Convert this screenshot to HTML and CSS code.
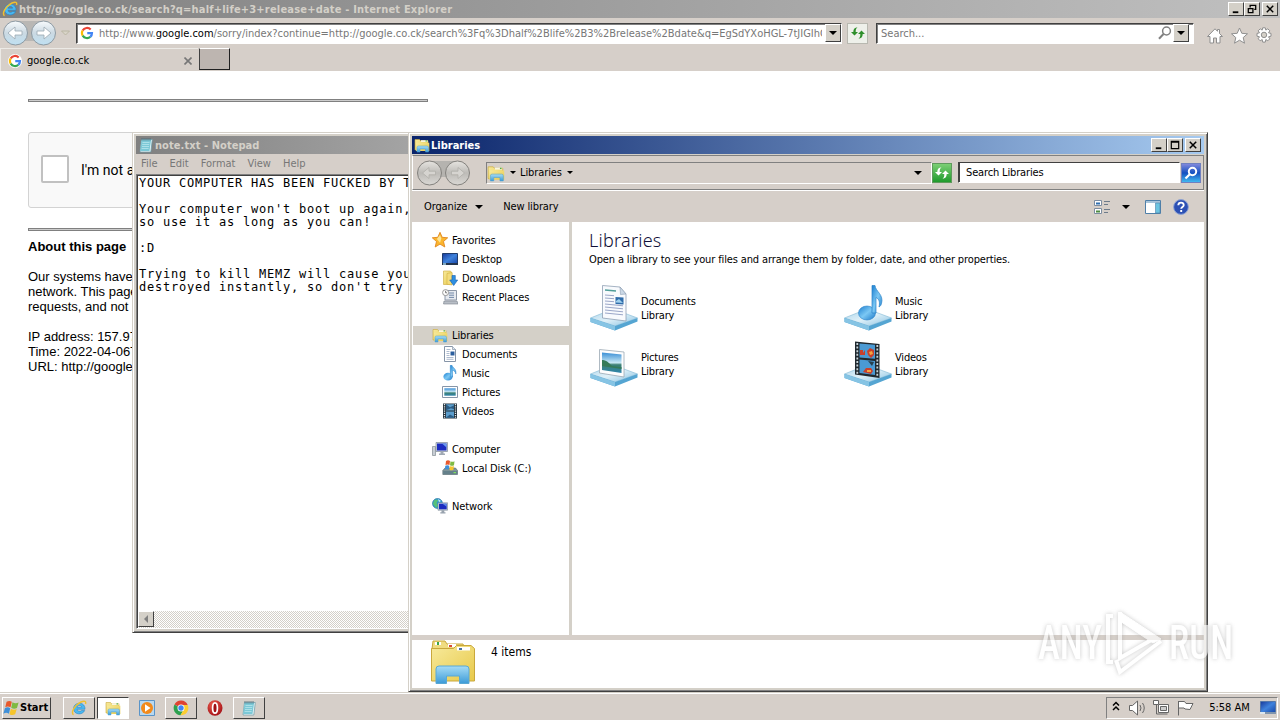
FILE: index.html
```html
<!DOCTYPE html>
<html lang="en">
<head>
    <meta charset="UTF-8">
    <meta name="viewport" content="width=device-width, initial-scale=1.0">
    <title>Desktop</title>
    <link rel="stylesheet" href="styles.css">
</head>
<body>
    <!-- Shared icons -->
    <svg class="sprite" width="0" height="0">
        <defs>
            <linearGradient id="gFolder" x1="0" y1="0" x2="1" y2="1">
                <stop offset="0" stop-color="#f7ea9c"/><stop offset="1" stop-color="#e8c94a"/>
            </linearGradient>
            <linearGradient id="gBlue" x1="0" y1="0" x2="0" y2="1">
                <stop offset="0" stop-color="#a6dcf6"/><stop offset="1" stop-color="#3c9bd8"/>
            </linearGradient>
            <linearGradient id="gScreen" x1="0" y1="0" x2="1" y2="1">
                <stop offset="0" stop-color="#16389a"/><stop offset=".5" stop-color="#3f82dc"/><stop offset="1" stop-color="#1746a8"/>
            </linearGradient>
            <linearGradient id="gBase" x1="0" y1="0" x2="1" y2="1">
                <stop offset="0" stop-color="#a9d3ea"/><stop offset=".5" stop-color="#dff0f8"/><stop offset="1" stop-color="#86c1e2"/>
            </linearGradient>
            <linearGradient id="gNote" x1="0" y1="0" x2="1" y2="1">
                <stop offset="0" stop-color="#1c7fd0"/><stop offset=".5" stop-color="#7cc8f4"/><stop offset="1" stop-color="#1a78c8"/>
            </linearGradient>
            <linearGradient id="gSky" x1="0" y1="0" x2="0" y2="1">
                <stop offset="0" stop-color="#3b8fd6"/><stop offset=".5" stop-color="#c9e8f4"/><stop offset=".6" stop-color="#3c7f72"/><stop offset="1" stop-color="#2f86ae"/>
            </linearGradient>
            <radialGradient id="gRed" cx=".4" cy=".3" r=".8">
                <stop offset="0" stop-color="#f06050"/><stop offset="1" stop-color="#9c0810"/>
            </radialGradient>
            <linearGradient id="gOrb" x1="0" y1="0" x2="0" y2="1">
                <stop offset="0" stop-color="#f8fbfd"/><stop offset=".5" stop-color="#cbd9e2"/><stop offset="1" stop-color="#bfe0f2"/>
            </linearGradient>
            <linearGradient id="gOrbGray" x1="0" y1="0" x2="0" y2="1">
                <stop offset="0" stop-color="#e6e4e0"/><stop offset=".5" stop-color="#bdbbb7"/><stop offset="1" stop-color="#dad8d4"/>
            </linearGradient>
        </defs>

        <symbol id="ie" viewBox="0 0 16 16">
            <path d="M14 9.300H6c.3 2.200 3.200 2.600 4.600 1.200h3.100C11.500 15.600 2.600 15 2.600 8.500c0-7 12-7.300 11.400.8zM6 7.200h4.700c-.3-2.300-4.400-2.300-4.700 0z" fill="#4ab8f0" stroke="#1a7cc4" stroke-width=".5"/>
            <path d="M2.600 14.600C-.5 13.500 3 5.500 10 2c3.500-1.600 5.400-.6 4.500 2" fill="none" stroke="#f0c030" stroke-width="1.400"/>
        </symbol>
        <symbol id="google" viewBox="0 0 16 16">
            <circle cx="8" cy="8" r="8" fill="#fff"/>
            <path d="M3 5.200A5.800 5.800 0 0 1 12.200 3.900" fill="none" stroke="#ea4335" stroke-width="2.500"/>
            <path d="M3 5.200A5.800 5.800 0 0 0 3.100 11" fill="none" stroke="#fbbc05" stroke-width="2.500"/>
            <path d="M3.100 11A5.800 5.800 0 0 0 11.800 12.400" fill="none" stroke="#34a853" stroke-width="2.500"/>
            <path d="M11.800 12.400A5.600 5.600 0 0 0 13.700 8.100H8.300" fill="none" stroke="#4285f4" stroke-width="2.500"/>
        </symbol>
        <symbol id="refresh" viewBox="0 0 16 16">
            <path d="M4.500 10.500L1 7h2.300c0-3 1.600-4.500 4.200-4.700C5.900 3.500 5.700 5 5.700 7H8zM11.500 5.500L15 9h-2.300c0 3-1.600 4.500-4.200 4.700 1.600-1.200 1.800-2.700 1.800-4.700H8z"/>
        </symbol>
        <symbol id="explorer" viewBox="0 0 16 16">
            <path d="M1 2.500h4.500l1 1.200H14V13H1z" fill="url(#gFolder)" stroke="#c9a83c" stroke-width=".6"/>
            <path d="M7 3.200h6.500V5H7z" fill="#f8f6e0"/><path d="M11.500 3.300H13v1.200h-1.500z" fill="#57ad4a"/>
            <path d="M2 5.700h13.300V14H2z" fill="url(#gFolder)"/>
            <path d="M3 15V10.500q0-1.500 1.500-1.500H13q1.500 0 1.500 1.500V15h-3v-3H6v3z" fill="url(#gBlue)" stroke="#4fa0cf" stroke-width=".5"/>
        </symbol>
        <symbol id="notepad" viewBox="0 0 16 16">
            <path d="M3.500 2.500h10.800L12.800 15H2z" fill="#e9f6f8" stroke="#6a9aa6" stroke-width=".7"/>
            <path d="M3.500 2.800h9.600L11.500 14H2.200z" fill="#7cc8d6"/>
            <path d="M4.500 5.500h7M4.200 7.500h7M4 9.500h7M3.600 11.500h7" stroke="#b8e6ec" stroke-width=".8"/>
            <path d="M4 1v2.500M6 1v2.500M8 1v2.500M10 1v2.500M12 1v2.500" stroke="#4a6874" stroke-width=".8"/>
        </symbol>
        <symbol id="star" viewBox="0 0 16 16">
            <path d="M8 .3l2.200 5 5.500.5-4.200 3.700 1.300 5.500L8 12.100l-4.800 2.900 1.300-5.500L.3 5.800l5.500-.5z" fill="#fbb52c" stroke="#e08820" stroke-width=".9"/>
            <path d="M8 3l1.300 3.500L8 10.800 4.900 7z" fill="#fde596"/>
        </symbol>
        <symbol id="desktop" viewBox="0 0 16 16">
            <path d="M.5 2.500h15v10.300H.5z" fill="url(#gScreen)" stroke="#203c6c"/>
            <path d="M0 12h16v2H0z" fill="#24344c"/><path d="M1 12.300h3v1.400H1z" fill="#a8d8f0"/>
        </symbol>
        <symbol id="downloads" viewBox="0 0 16 16">
            <path d="M1.500 1h7l1.500 2v11.500H1.500z" fill="url(#gFolder)" stroke="#cda93a" stroke-width=".6"/>
            <path d="M5 3.500l5-1V15l-5-.8z" fill="#f3dc7c" stroke="#cda93a" stroke-width=".5"/>
            <path d="M10 5.500h3.300V10H15.700l-4 5.500-4-5.500H10z" fill="#2f8fe0" stroke="#1a62b0" stroke-width=".6"/>
        </symbol>
        <symbol id="recent" viewBox="0 0 16 16">
            <path d="M3 1.500h11.500v9.500H3z" fill="#e6eaf0" stroke="#8d98a8"/>
            <path d="M7 4h5M7 6.200h5M7 8.400h5" stroke="#7088a8"/>
            <path d="M2 12h13l1 3H1.500z" fill="#b8bec6" stroke="#78818c" stroke-width=".6"/>
            <circle cx="3.600" cy="3.600" r="3" fill="#fff" stroke="#8f8f8f" stroke-width=".9"/>
            <path d="M3.600 1.800v2h1.500" fill="none" stroke="#555" stroke-width=".8"/>
        </symbol>
        <symbol id="document" viewBox="0 0 16 16">
            <path d="M2.500.5h8l3 3v12h-11z" fill="#fff" stroke="#8695a8"/>
            <path d="M10.500.5v3h3" fill="#dce6f0" stroke="#8695a8" stroke-width=".7"/>
            <path d="M4.500 3.500h4M4.500 5.500h3M4.500 7.500h3M4.500 9.500h3M4.500 11.500h7M4.500 13.300h7" stroke="#9aabc4" stroke-width=".8"/>
            <path d="M8.500 5.500h4v4h-4z" fill="#2c5f9e"/>
        </symbol>
        <symbol id="music" viewBox="0 0 16 16">
            <ellipse cx="6" cy="11.700" rx="4.600" ry="3.900" fill="url(#gNote)"/>
            <path d="M8.300 12V.3H10c.5 2.500 4.800 3.500 3.800 8.700-.4-2.300-1.600-3.500-3.300-3.800V12z" fill="url(#gNote)" stroke="#2a82c8" stroke-width=".5"/>
        </symbol>
        <symbol id="picture" viewBox="0 0 16 16">
            <path d="M.5 2.500h15v11H.5z" fill="#fff" stroke="#8695a8"/><path d="M2.300 4.300h11.400v7.400H2.300z" fill="url(#gSky)"/>
        </symbol>
        <symbol id="video" viewBox="0 0 16 16">
            <path d="M1 .5h14v15H1z" fill="#22303a"/>
            <path d="M4 1.200h8v6.200H4zM4 8.600h8v6.200H4z" fill="#5b9dcc"/>
            <path d="M4 1.200l4 3 4-2v4l-3-1-5 2zM4 14.500l4-3 4 2.300v1H4z" fill="#2b5c84"/>
            <path d="M2.500 1v14M13.500 1v14" stroke="#e4eaee" stroke-width="1.300" stroke-dasharray="1.200 1"/>
        </symbol>
        <symbol id="computer" viewBox="0 0 16 16">
            <path d="M.5 5.500h3v9h-3z" fill="#c8ced4" stroke="#848c94" stroke-width=".7"/>
            <path d="M4 1.500h11.500v9H4z" fill="#cdd6e0" stroke="#7e8a98" stroke-width=".7"/>
            <path d="M5 2.500h9.500v7H5z" fill="#1c2cc0"/><path d="M10 2.500h4.500v4z" fill="#6a9aee"/>
            <path d="M8.500 10.500h3v2H13v1.500H7v-1.500h1.500z" fill="#a0a9b4"/>
        </symbol>
        <symbol id="disk" viewBox="0 0 16 16">
            <path d="M.8 10.500L3 8h10.500l2 2.500v4H.8z" fill="#7f9498" stroke="#53666c" stroke-width=".6"/>
            <path d="M1.200 11h14v3.200h-14z" fill="#64808a"/><path d="M11.500 12h2.500v1.200h-2.500z" fill="#7fe060"/>
            <path d="M4 1q2-1.500 4 0L7.500 5q-2-1-4 0z" fill="#e8592c"/><path d="M8.500 1.200q2 1 4 0L12 5.200q-2 1-4 0z" fill="#7fba42"/>
            <path d="M3.300 5.800q2-1 4 0L6.800 9.500q-2-1-4 0z" fill="#3f8fd8"/><path d="M7.900 6q2 1 4 0l-.5 3.800q-2 1-4 0z" fill="#f6c52c"/>
        </symbol>
        <symbol id="network" viewBox="0 0 16 16">
            <circle cx="5.500" cy="5.500" r="5" fill="#2c9ad0" stroke="#1c6a9c" stroke-width=".6"/>
            <path d="M2 2.500q3-2 4 0L4.500 5 6 7.500 4 10 1 6z" fill="#58c078"/><path d="M6 1l3 2-2 1z" fill="#d0f0f8"/>
            <path d="M6 4.800h9.600v7.400H6z" fill="#d2dae2" stroke="#6f7c8c" stroke-width=".6"/><path d="M7 5.700h7.700v5.600H7z" fill="#1c2cc0"/>
            <path d="M10.500 5.700h4.200v3z" fill="#5c88e8"/><path d="M9.500 12.200h2.800v2h1.200v1.300H8.300v-1.300h1.200z" fill="#98a2ae"/>
        </symbol>
        <symbol id="base" viewBox="0 0 48 46">
            <path d="M.5 33L23 24l24.500 9L25 41z" fill="url(#gBase)" stroke="#8fc0da" stroke-width=".7"/>
            <path d="M.5 33L25 41l22.500-8v3.500L25 45.500.5 37z" fill="#55a5d2"/>
            <path d="M.5 33L25 41v4.500L.5 37z" fill="#86c4e4"/>
        </symbol>
        <symbol id="winflag" viewBox="0 0 18 16">
            <path d="M3.800 1.500q3-2 5.500 0L8 7.300q-3-2-5.600 0z" fill="#e8592c"/><path d="M10 2q3 2 6.500.3l-1.700 5.600q-3 1.700-6.100-.1z" fill="#7fba42"/>
            <path d="M2 8.200q3-2 5.600 0L6.300 14q-3-2-5.900 0z" fill="#3f8fd8"/><path d="M8.400 8.700q3 2 6.100.3l-1.600 5.700q-3 1.700-6.100-.1z" fill="#f6c52c"/>
        </symbol>
    </svg>

    <div class="desktop">
        <!-- Internet Explorer -->
        <div class="browser">
            <div class="titlebar browser-title">
                <svg class="icon"><use href="#ie"/></svg>
                <span class="title-text">http://google.co.ck/search?q=half+life+3+release+date - Internet Explorer</span>
                <div class="controls">
                    <svg class="ctl" viewBox="0 0 15 13"><path d="M4 10h6" stroke="#000" stroke-width="2"/></svg>
                    <svg class="ctl" viewBox="0 0 15 13"><path d="M5.500 5V2.500h6v4.500H10M5 2.500h7M3.500 6h5v4.500h-5zM3 6h6" fill="none" stroke="#000" stroke-width="1.400"/></svg>
                    <svg class="ctl ctl-close" viewBox="0 0 15 13"><path d="M4 3l7 7M11 3l-7 7" stroke="#000" stroke-width="1.600"/></svg>
                </div>
            </div>
            <div class="nav">
                <svg class="nav-orbs" width="74" height="28" viewBox="0 0 74 28">
                    <path d="M14 2h30v20H14z" fill="#b9b7b4"/>
                    <circle cx="15.500" cy="14" r="12" fill="url(#gOrb)" stroke="#8d9aa3"/>
                    <circle cx="43.500" cy="14" r="12" fill="url(#gOrb)" stroke="#8d9aa3"/>
                    <path d="M8 14l7-6v4h7v4h-7v4zM51 14l-7-6v4h-7v4h7v4z" fill="#fff" stroke="#9aa8b2" stroke-width=".8"/>
                    <path d="M61.500 12h8l-4 4z" fill="#d8d4c8" stroke="#b4b09c" stroke-width=".8"/>
                </svg>
                <div class="address">
                    <svg class="g-icon"><use href="#google"/></svg>
                    <div class="url">http://www.<b>google.com</b>/sorry/index?continue=http://google.co.ck/search%3Fq%3Dhalf%2Blife%2B3%2Brelease%2Bdate&amp;q=EgSdYXoHGL-7tJIGIhC</div>
                    <div class="drop-btn"></div>
                </div>
                <div class="reload"><svg class="icon"><use href="#refresh"/></svg></div>
                <div class="search">
                    <span>Search...</span>
                    <svg class="lens" width="14" height="14" viewBox="0 0 14 14"><circle cx="8.500" cy="5" r="3.900" fill="none" stroke="#808080" stroke-width="1.500"/><path d="M5.500 8L1 12.700" stroke="#808080" stroke-width="2"/></svg>
                    <div class="drop-btn"></div>
                </div>
                <svg class="tools" width="68" height="18" viewBox="0 0 68 18">
                    <g fill="#fff" stroke="#8f8f8f">
                        <path d="M1.500 9.500L9 1.800l2.500 2.500V2.500h2v4l3 3H14V16h-3.500v-5h-3v5H4V9.500z"/>
                        <path d="M33.500 1l2.300 5.300 5.700.5-4.300 3.800 1.300 5.600-5-3-5 3 1.300-5.600-4.300-3.800 5.700-.5z"/>
                        <path d="M56.700.8h2.600l.5 2.300 2-1.300 2 2-1.300 2 2.500.6v2.800l-2.500.6 1.300 2-2 2-2-1.300-.5 2.600h-2.600l-.5-2.600-2 1.300-2-2 1.300-2-2.500-.6V6.400l2.500-.6-1.300-2 2-2 2 1.300z"/>
                        <circle cx="58" cy="7.900" r="2.700" fill="#d4d0c8"/>
                    </g>
                </svg>
            </div>
            <div class="tabs">
                <div class="tab">
                    <svg class="g-icon"><use href="#google"/></svg>
                    <span>google.co.ck</span>
                    <svg class="tab-close" width="8" height="8" viewBox="0 0 8 8"><path d="M.5.5l7 7M7.500.500l-7 7" stroke="#777" stroke-width="1.600"/></svg>
                </div>
                <div class="new-tab"></div>
            </div>
            <div class="page">
                <hr>
                <div class="captcha">
                    <div class="checkbox"></div>
                    <span>I'm not a</span>
                </div>
                <hr>
                <h4>About this page</h4>
                <p>Our systems have<br>network. This page<br>requests, and not</p>
                <p>IP address: 157.97<br>Time: 2022-04-06T<br>URL: http://google.</p>
            </div>
        </div>

        <!-- Notepad -->
        <div class="window notepad">
            <div class="titlebar">
                <svg class="icon"><use href="#notepad"/></svg>
                <span class="title-text">note.txt - Notepad</span>
            </div>
            <div class="menu"><span>File</span><span>Edit</span><span>Format</span><span>View</span><span>Help</span></div>
            <div class="editor">
<pre>YOUR COMPUTER HAS BEEN FUCKED BY THE

Your computer won't boot up again,
so use it as long as you can!

:D

Trying to kill MEMZ will cause your
destroyed instantly, so don't try it</pre>
                <div class="scrollbar"><div class="scroll-btn"></div></div>
            </div>
        </div>

        <!-- Libraries -->
        <div class="window libraries">
            <div class="titlebar active">
                <svg class="icon"><use href="#explorer"/></svg>
                <span class="title-text">Libraries</span>
                <div class="controls">
                    <svg class="ctl" viewBox="0 0 15 13"><path d="M4 10h6" stroke="#000" stroke-width="2"/></svg>
                    <svg class="ctl" viewBox="0 0 15 13"><path d="M3.500 2.500h8v8h-8zM3 3.500h9" fill="none" stroke="#000" stroke-width="1.300"/></svg>
                    <svg class="ctl ctl-close" viewBox="0 0 15 13"><path d="M4 3l7 7M11 3l-7 7" stroke="#000" stroke-width="1.600"/></svg>
                </div>
            </div>
            <div class="lib-nav">
                <svg class="lib-orbs" width="56" height="28" viewBox="0 0 56 28">
                    <path d="M14 2h28v16H14z" fill="#b5b3af"/>
                    <circle cx="15.500" cy="14" r="12" fill="url(#gOrbGray)" stroke="#83817d"/>
                    <circle cx="43.500" cy="14" r="12" fill="url(#gOrbGray)" stroke="#83817d"/>
                    <path d="M8.500 14l6.500-5.500v3.700h6.500v3.600H15v3.700zM50.500 14L44 8.500v3.700h-6.500v3.600H44v3.700z" fill="#d6d4d0" stroke="#b0aeaa" stroke-width=".8"/>
                </svg>
                <div class="crumbs">
                    <svg class="crumb-icon"><use href="#explorer"/></svg>
                    <i class="caret small"></i>
                    <span>Libraries</span>
                    <i class="caret small"></i>
                    <i class="caret last"></i>
                </div>
                <div class="go"><svg class="icon"><use href="#refresh"/></svg></div>
                <div class="lib-search">Search Libraries</div>
                <div class="lib-search-btn"><svg width="14" height="14" viewBox="0 0 14 14"><circle cx="8.500" cy="5.500" r="3.700" fill="none" stroke="#fff" stroke-width="2"/><path d="M5.800 8.200L1.500 12.500" stroke="#fff" stroke-width="2.200"/></svg></div>
            </div>
            <div class="commands">
                <span>Organize</span><i class="caret"></i>
                <span class="new-library">New library</span>
                <svg class="view-icon" width="17" height="16" viewBox="0 0 17 16"><path d="M.5 1.500h7v5h-7zM.5 9.500h7v5h-7z" fill="#fff" stroke="#7d8da0"/><path d="M2 4.500h4" stroke="#2f6fb0" stroke-width="2"/><path d="M2 12.500h4" stroke="#4d8a40" stroke-width="2"/><path d="M10 2.500h6M10 5.500h4M10 10.500h6M10 13.500h4" stroke="#6d7b8a"/></svg>
                <i class="caret"></i>
                <svg class="pane-icon" width="16" height="14" viewBox="0 0 16 14"><path d="M.5.500h15v13H.500z" fill="#fff" stroke="#4f7fa8"/><path d="M1 2h14" stroke="#a8c4da" stroke-width="2"/><path d="M10.500 3H15v10h-4.500z" fill="#6cc4e0" stroke="#4f7fa8" stroke-width=".6"/></svg>
                <svg class="help-icon" width="16" height="16" viewBox="0 0 16 16"><circle cx="8" cy="8" r="7.400" fill="#2c50b4" stroke="#8fa4d4"/><path d="M5.300 6.200c.2-3.600 5.600-3.300 5.400 0-.1 1.800-2.500 1.800-2.500 3.600M8.200 11v2" fill="none" stroke="#fff" stroke-width="1.900"/></svg>
            </div>
            <div class="lib-body">
                <div class="tree">
                    <div class="node"><svg class="icon"><use href="#star"/></svg>Favorites</div>
                    <div class="node sub"><svg class="icon"><use href="#desktop"/></svg>Desktop</div>
                    <div class="node sub"><svg class="icon"><use href="#downloads"/></svg>Downloads</div>
                    <div class="node sub"><svg class="icon"><use href="#recent"/></svg>Recent Places</div>
                    <div class="node group selected"><svg class="icon"><use href="#explorer"/></svg>Libraries</div>
                    <div class="node sub"><svg class="icon"><use href="#document"/></svg>Documents</div>
                    <div class="node sub"><svg class="icon"><use href="#music"/></svg>Music</div>
                    <div class="node sub"><svg class="icon"><use href="#picture"/></svg>Pictures</div>
                    <div class="node sub"><svg class="icon"><use href="#video"/></svg>Videos</div>
                    <div class="node group"><svg class="icon"><use href="#computer"/></svg>Computer</div>
                    <div class="node sub"><svg class="icon"><use href="#disk"/></svg>Local Disk (C:)</div>
                    <div class="node group"><svg class="icon"><use href="#network"/></svg>Network</div>
                </div>
                <div class="content">
                    <h1>Libraries</h1>
                    <div class="hint">Open a library to see your files and arrange them by folder, date, and other properties.</div>
                    <div class="tiles">
                        <div class="tile">
                            <svg width="48" height="46" viewBox="0 0 48 46"><use href="#base"/>
                                <path d="M12.500.5L30 2l6 7v27l-23.500-3z" fill="#f8fafd" stroke="#8fa0b4" stroke-width=".8"/>
                                <path d="M30 2l.5 7.500L36 9z" fill="#cbd8e6" stroke="#8fa0b4" stroke-width=".6"/>
                                <path d="M15 5l11 1" stroke="#4f9c98" stroke-width="1.500"/>
                                <path d="M15 10l9 .7M15 13l9 .7M15 16l9 .7M15 19l18 1.800M15 22l18 1.800M15 25l18 1.800M15 28l18 1.800" stroke="#9aa6c8"/>
                                <path d="M25.500 12l8 .6v7l-8-.6z" fill="#2f6caa"/><path d="M26 16l3-2 4 4-7-.5z" fill="#9fd0ee"/></svg>
                            <div>Documents<br>Library</div>
                        </div>
                        <div class="tile">
                            <svg width="48" height="46" viewBox="0 0 48 46"><use href="#base"/>
                                <ellipse cx="23" cy="28" rx="8.500" ry="7" fill="url(#gNote)" stroke="#2a82c8" stroke-width=".6"/>
                                <path d="M28 28V.5h3c.5 6 9 9 6.500 18-.5 2-1.500 3-2.500 3.500 1-4 .5-8-3-9.500V28z" fill="url(#gNote)" stroke="#2a82c8" stroke-width=".7"/></svg>
                            <div>Music<br>Library</div>
                        </div>
                        <div class="tile">
                            <svg width="48" height="46" viewBox="0 0 48 46"><use href="#base"/>
                                <path d="M9.500 8.500L34 11v25L9.500 32z" fill="#fdfdfe" stroke="#9aa8b4" stroke-width=".8"/>
                                <path d="M12 11.500l19.500 2v18.500L12 29z" fill="url(#gSky)"/><path d="M12 19q4-1 10 6l9.500 1v2L12 25z" fill="#357a58"/></svg>
                            <div>Pictures<br>Library</div>
                        </div>
                        <div class="tile">
                            <svg width="48" height="46" viewBox="0 0 48 46"><use href="#base"/>
                                <path d="M11 .5L35.500 3v34L11 33.500z" fill="#20282e"/>
                                <path d="M15.500 2.500l15.500 1.300v14L15.500 16.500zM15.500 18.500L31 20v14l-15.500-2z" fill="#4b9ad4"/>
                                <path d="M16 14v-5h3v3l2-3v5zM24 14l-1-4 3-3 4 2v5l-3 3zM19 31l3-4h5l2 3-2 3z" fill="#c8402c"/><path d="M25 11l3-1 1 3-3 1zM23 29h4v2h-4z" fill="#f4a440"/><path d="M24 20l6 1-2 4z" fill="#27404e"/>
                                <path d="M13.300 2v31.500M33.300 4v32" stroke="#c8d4da" stroke-width="1.800" stroke-dasharray="2 1.600"/></svg>
                            <div>Videos<br>Library</div>
                        </div>
                    </div>
                </div>
            </div>
            <div class="details">
                <svg width="46" height="46" viewBox="0 0 46 46">
                    <path d="M3 1h12l2 3h16l2 5H2z" fill="#f0dc80" stroke="#c9a83c"/>
                    <path d="M5 2h6v3H5zM18 4h8v3h-8z" fill="#fff"/><path d="M7 2h2v3H7z" fill="#3ea447"/><path d="M19 5h3v2h-3z" fill="#d84a34"/>
                    <path d="M1.500 8.500h22l3-3H41l3.500 3V41h-43z" fill="url(#gFolder)" stroke="#c9a83c"/>
                    <path d="M27 7h13v3.500H27z" fill="#fff"/><path d="M29 8h3v2h-3z" fill="#47709c"/>
                    <path d="M6 43.500V29q0-3 3-3h27q3 0 3 3v14.500H29.500V36h-13v7.500z" fill="url(#gBlue)" stroke="#5aa8d4"/>
                </svg>
                <span>4 items</span>
            </div>
        </div>

        <!-- Taskbar -->
        <div class="taskbar">
            <div class="start"><svg width="17" height="16"><use href="#winflag"/></svg><span>Start</span></div>
            <div class="task raised"><svg class="task-icon"><use href="#ie"/></svg></div>
            <div class="task pressed"><svg class="task-icon"><use href="#explorer"/></svg></div>
            <div class="task"><svg class="task-icon" viewBox="0 0 16 16"><path d="M.5.500h15v15H.500z" fill="#b8d8f0" stroke="#5a94c8"/><circle cx="8" cy="8" r="6" fill="#f28a1c"/><path d="M6 4.200v7.600L11.500 8z" fill="#fff"/></svg></div>
            <div class="task raised"><svg class="task-icon" viewBox="0 0 16 16"><path d="M8 8L1.500 4.500A7.300 7.300 0 0 1 14.700 5H8z" fill="#df4332"/><path d="M1.500 4.500A7.300 7.300 0 0 0 7.500 15.300L10.500 10z" fill="#2da04e"/><path d="M14.700 5A7.300 7.300 0 0 1 7.500 15.300L11 9 8 5z" fill="#fccd30"/><circle cx="8" cy="8" r="3.500" fill="#fff"/><circle cx="8" cy="8" r="2.700" fill="#4285f4"/></svg></div>
            <div class="task"><svg class="task-icon" viewBox="0 0 16 16"><ellipse cx="8" cy="8" rx="7.500" ry="7.800" fill="url(#gRed)"/><ellipse cx="8" cy="8" rx="2.400" ry="5.200" fill="#a01014" stroke="#fff" stroke-width="1.700"/></svg></div>
            <div class="task raised"><svg class="task-icon"><use href="#notepad"/></svg></div>
            <div class="tray">
                <svg width="84" height="18" viewBox="0 0 84 18">
                    <path d="M3 6.500L6 3.500l3 3M3 11L6 8l3 3" fill="none" stroke="#000" stroke-width="1.500"/>
                    <g fill="#fff" stroke="#666">
                        <path d="M19.500 6.500h3L27.500 2v14l-5-4.500h-3z"/>
                        <path d="M30 6q2 3 0 6M32.500 4q3.500 5 0 10" fill="none"/>
                        <path d="M48.500 5.500h10v8h-10z"/><path d="M50.500 7.500h6v4h-6z" fill="#ccc"/><path d="M43.500 1.500h5v4h-5z"/><path d="M46.500 5.500v9.500h11" fill="none"/>
                        <path d="M68.500 2v14.500M68.500 2.500h6l1.500 2h7l-3 6-5-.5-1-1h-5.500z"/>
                    </g>
                </svg>
                <span class="clock">5:58 AM</span>
                <svg class="show-desktop" width="16" height="14" viewBox="0 0 16 14"><path d="M.500.500h15v11H.500z" fill="url(#gScreen)" stroke="#5476a8"/><path d="M0 11h16v2H0z" fill="#dce6ee"/><path d="M5 11.500h11v1H5z" fill="#23426c"/></svg>
            </div>
        </div>

        <svg class="watermark" width="206" height="74" viewBox="0 0 206 74">
            <g font-family="Roboto, sans-serif" font-size="49" font-weight="500">
                <text x="4" y="55" textLength="64" lengthAdjust="spacingAndGlyphs">ANY</text>
                <text x="135" y="55" textLength="64" lengthAdjust="spacingAndGlyphs">RUN</text>
            </g>
            <path d="M79 12h-5v46h5" fill="none" stroke-width="4"/>
            <path d="M86 8l41 27-8 4L86 17z" stroke-width="1"/>
            <path d="M86 8v46l33-19M82 56l4 12 41-31" fill="none" stroke-width="4"/>
        </svg>
    </div>
</body>
</html>
```

FILE: styles.css
```css
* {
    box-sizing: border-box;
}
body {
    margin: 0;
    font-family: "DejaVu Sans Condensed", "DejaVu Sans", sans-serif;
    font-stretch: condensed;
    font-size: 11px;
    color: #000;
}
.sprite {
    position: absolute;
}
.desktop {
    position: relative;
    width: 1280px;
    height: 720px;
    overflow: hidden;
    background: #fff;
}
svg {
    display: block;
    flex: none;
}
.icon {
    width: 16px;
    height: 16px;
}

/* title bars */
.titlebar {
    display: flex;
    align-items: center;
    height: 18px;
    padding: 0 3px 0 2px;
    background: linear-gradient(to right, #808080, #c0c0c0);
    color: #d4d0c8;
    font-weight: bold;
    white-space: nowrap;
}
.titlebar.active {
    background: linear-gradient(to right, #0a246a, #a6caf0);
    color: #fff;
}
.title-text {
    flex: 1;
    padding-left: 1px;
}
.controls {
    display: flex;
}
.ctl {
    width: 16px;
    height: 14px;
    background: #d4d0c8;
    border: 1px solid;
    border-color: #fff #404040 #404040 #fff;
}
.ctl-close {
    margin-left: 2px;
}

/* browser */
.browser {
    height: 692px;
    display: flex;
    flex-direction: column;
    background: #d6cfc9;
}
.browser-title {
    padding-right: 2px;
}
.browser-title .title-text {
    letter-spacing: 0.19px;
}
.nav {
    display: flex;
    align-items: center;
    height: 30px;
}
.address {
    display: flex;
    align-items: center;
    width: 766px;
    height: 21px;
    margin-left: 2px;
    padding-left: 3px;
    background: #fff;
    border: 1px solid;
    border-color: #404040 #fff #fff #404040;
    box-shadow: inset 1px 1px #808080;
}
.g-icon {
    width: 14px;
    height: 14px;
}
.url {
    flex: 1;
    width: 0;
    margin-left: 5px;
    overflow: hidden;
    white-space: nowrap;
    color: #777;
}
.url b {
    font-weight: normal;
    color: #000;
}
.drop-btn {
    display: flex;
    align-items: center;
    justify-content: center;
    width: 16px;
    height: 18px;
    margin-left: 3px;
    background: #d4d0c8;
    border: 1px solid;
    border-color: #fff #404040 #404040 #fff;
}
.drop-btn::after {
    content: "";
    border: 4px solid transparent;
    border-top-color: #000;
    border-bottom: 0;
}
.reload {
    display: flex;
    align-items: center;
    justify-content: center;
    width: 21px;
    height: 21px;
    margin: 0 8px 0 5px;
    background: #eef0ea;
    border: 1px solid #b8b8b0;
    fill: #2f8f2c;
}
.search {
    display: flex;
    align-items: center;
    width: 318px;
    height: 21px;
    padding: 0 4px;
    background: #fff;
    border: 1px solid;
    border-color: #404040 #fff #fff #404040;
    box-shadow: inset 1px 1px #808080;
    color: #777;
}
.search span {
    flex: 1;
}
.search .drop-btn {
    margin-left: 1px;
}
.tools {
    margin: 5px 0 0 12px;
}
.tabs {
    display: flex;
    height: 23px;
}
.tab {
    display: flex;
    align-items: center;
    width: 198px;
    padding: 1px 6px 0 7px;
    border-top: 1px solid #eceae6;
    border-left: 1px solid #eceae6;
}
.tab span {
    flex: 1;
    padding-left: 5px;
}
.new-tab {
    width: 31px;
    height: 22px;
    margin-left: 1px;
    background: #bdb5b0;
    border: 1px solid;
    border-color: #fff #202020 #202020 #404040;
}
.page {
    flex: 1;
    padding: 28px;
    background: #fff;
    font: 13px/15px "Liberation Sans", Arial, sans-serif;
}
.page hr {
    width: 400px;
    height: 3px;
    margin: 0;
    background: #ccc;
    border: 1px solid #808080;
}
.captcha {
    display: flex;
    align-items: center;
    width: 304px;
    height: 76px;
    margin: 30px 0 20px;
    padding: 0 12px;
    background: #f9f9f9;
    border: 1px solid #d3d3d3;
    border-radius: 3px;
    font: 14px Roboto, sans-serif;
}
.checkbox {
    width: 28px;
    height: 28px;
    margin: -3px 12px 0 0;
    background: #fff;
    border: 2px solid #c1c1c1;
    border-radius: 2px;
}
.page h4 {
    margin: 8px 0 15px;
    font-size: 13px;
}
.page p {
    margin: 0 0 15px;
}

/* windows */
.window {
    position: absolute;
    padding: 3px;
    background: #d4d0c8;
    border: 1px solid;
    border-color: #d4d0c8 #404040 #404040 #d4d0c8;
    box-shadow: inset 1px 1px #fff, inset -1px -1px #808080;
}
.notepad {
    left: 132px;
    top: 132px;
    width: 500px;
    height: 501px;
    display: flex;
    flex-direction: column;
}
.notepad .title-text {
    letter-spacing: 0.07px;
}
.menu {
    display: flex;
    gap: 12px;
    height: 20px;
    padding: 0 5px;
    line-height: 20px;
    background: #d6cfc9;
    color: #777;
}
.editor {
    flex: 1;
    display: flex;
    flex-direction: column;
    background: #fff;
    border: 1px solid;
    border-color: #808080 #fff #fff #808080;
    box-shadow: inset 1px 1px #404040;
}
.editor pre {
    flex: 1;
    margin: 0;
    padding: 2px 0 0 2px;
    font: 12px/13px "DejaVu Sans Mono", monospace;
    letter-spacing: 0.78px;
}
.scrollbar {
    height: 17px;
    margin-left: 1px;
    background: repeating-conic-gradient(#d4d0c8 0 25%, #fff 0 50%) 0 0 / 2px 2px;
}
.scroll-btn {
    display: flex;
    align-items: center;
    justify-content: center;
    width: 16px;
    height: 16px;
    background: #d4d0c8;
    border: 1px solid;
    border-color: #fff #404040 #404040 #fff;
}
.scroll-btn::after {
    content: "";
    border: 4px solid transparent;
    border-right-color: #808080;
    border-left: 0;
}

/* libraries window */
.libraries {
    left: 408px;
    top: 132px;
    width: 800px;
    height: 560px;
    display: flex;
    flex-direction: column;
}
.lib-nav {
    display: flex;
    align-items: center;
    height: 35px;
    margin-top: 1px;
    background: #d6cfc9;
    border: 1px solid;
    border-color: #808080 #808080 #808080 #fff;
    box-shadow: 0 1px #fff;
}
.lib-orbs {
    margin-left: 1px;
}
.crumbs {
    display: flex;
    align-items: center;
    width: 446px;
    height: 22px;
    margin-left: 16px;
    border: 1px solid;
    border-color: #808080 #fff #fff #808080;
}
.crumb-icon {
    width: 18px;
    height: 18px;
    margin-right: 5px;
}
.caret {
    border: 4px solid transparent;
    border-top-color: #000;
    border-bottom: 0;
}
.caret.small {
    border-width: 3px 3px 0;
}
.crumbs span {
    margin: 0 5px 0 4px;
    letter-spacing: -0.1px;
}
.caret.last {
    margin: 0 9px 0 auto;
}
.go {
    display: flex;
    align-items: center;
    justify-content: center;
    width: 20px;
    height: 20px;
    margin-right: 6px;
    background: linear-gradient(#7ccf74, #1f9a2c);
    border: 1px solid #5f9a5c;
    fill: #fff;
}
.lib-search {
    width: 222px;
    height: 21px;
    padding: 4px 7px;
    line-height: 12px;
    letter-spacing: -0.15px;
    background: #fff;
    border: 1px solid;
    border-color: #404040 #fff #fff #404040;
    box-shadow: inset 1px 0 #404040;
}
.lib-search-btn {
    display: flex;
    align-items: center;
    justify-content: center;
    width: 20px;
    height: 20px;
    margin-left: 1px;
    background: linear-gradient(#8088dc, #1450c0 50%, #40b8f0);
    border: 1px solid #6f80c0;
}
.commands {
    display: flex;
    align-items: center;
    height: 31px;
    padding: 0 15px 0 12px;
    background: #d6cfc9;
    margin-top: 1px;
}
.commands span {
    letter-spacing: -0.13px;
}
.commands .caret {
    margin-left: 8px;
}
.new-library {
    margin-left: 20px;
}
.view-icon {
    margin-left: auto;
}
.commands .view-icon + .caret {
    margin: 0 15px 0 11px;
}
.help-icon {
    margin-left: 12px;
}
.lib-body {
    flex: 1;
    display: flex;
    background: #fff;
}
.tree {
    width: 160px;
    padding-top: 9px;
    padding-left: 1px;
    border-right: 3px solid #d4d0c8;
    letter-spacing: -0.12px;
}
.node {
    display: flex;
    align-items: center;
    gap: 4px;
    height: 19px;
    padding-left: 19px;
    line-height: 19px;
}
.node .icon {
    margin-top: -1px;
}
.node.sub {
    padding-left: 29px;
}
.node.group {
    margin-top: 19px;
}
.node.selected {
    background: #d4d0c8;
}
.content {
    padding: 6px 0 0 17px;
}
.content h1 {
    margin: 0;
    font: 18px/24px "Noto Sans", sans-serif;
    font-weight: 300;
    letter-spacing: 0.25px;
    color: #101038;
}
.hint {
    height: 14px;
    line-height: 16px;
    letter-spacing: -0.13px;
}
.tiles {
    display: grid;
    grid-template-columns: 254px 254px;
    grid-auto-rows: 56px;
    margin-top: 14px;
}
.tile {
    display: flex;
    align-items: center;
    gap: 3px;
    padding-left: 1px;
    line-height: 14px;
    letter-spacing: -0.2px;
}
.tile div {
    padding-top: 2px;
}
.details {
    display: flex;
    height: 53px;
    padding-left: 18px;
    background: #fff;
    border-top: 5px solid #d6cfc9;
}
.details span {
    margin: 5px 0 0 15px;
    font-size: 12px;
}

/* taskbar */
.taskbar {
    display: flex;
    align-items: center;
    height: 28px;
    padding: 2px 2px 0;
    background: #d6cfc9;
    border-top: 1px solid #d4d0c8;
    box-shadow: inset 0 1px #fff;
}
.start {
    display: flex;
    align-items: center;
    width: 49px;
    height: 22px;
    margin-right: 12px;
    border: 1px solid;
    border-color: #fff #404040 #404040 #fff;
    font-weight: bold;
}
.task {
    display: flex;
    align-items: center;
    justify-content: center;
    width: 32px;
    height: 22px;
    margin-right: 2px;
    border: 1px solid transparent;
}
.task-icon {
    width: 16px;
    height: 16px;
}
.raised {
    border-color: #fff #404040 #404040 #fff;
}
.pressed {
    background: #fff;
    border-color: #404040 #fff #fff #404040;
}
.tray {
    display: flex;
    align-items: center;
    width: 172px;
    height: 22px;
    margin-left: auto;
    padding: 0 1px 0 3px;
    border: 1px solid;
    border-color: #808080 #fff #fff #808080;
}
.clock {
    flex: 1;
    text-align: center;
    padding-left: 5px;
}

.watermark {
    position: absolute;
    left: 1034px;
    top: 604px;
    fill: #fff;
    stroke: #fff;
    opacity: 0.65;
    filter: drop-shadow(0 0 2px #aaa);
}
.watermark text {
    stroke: none;
}
```
